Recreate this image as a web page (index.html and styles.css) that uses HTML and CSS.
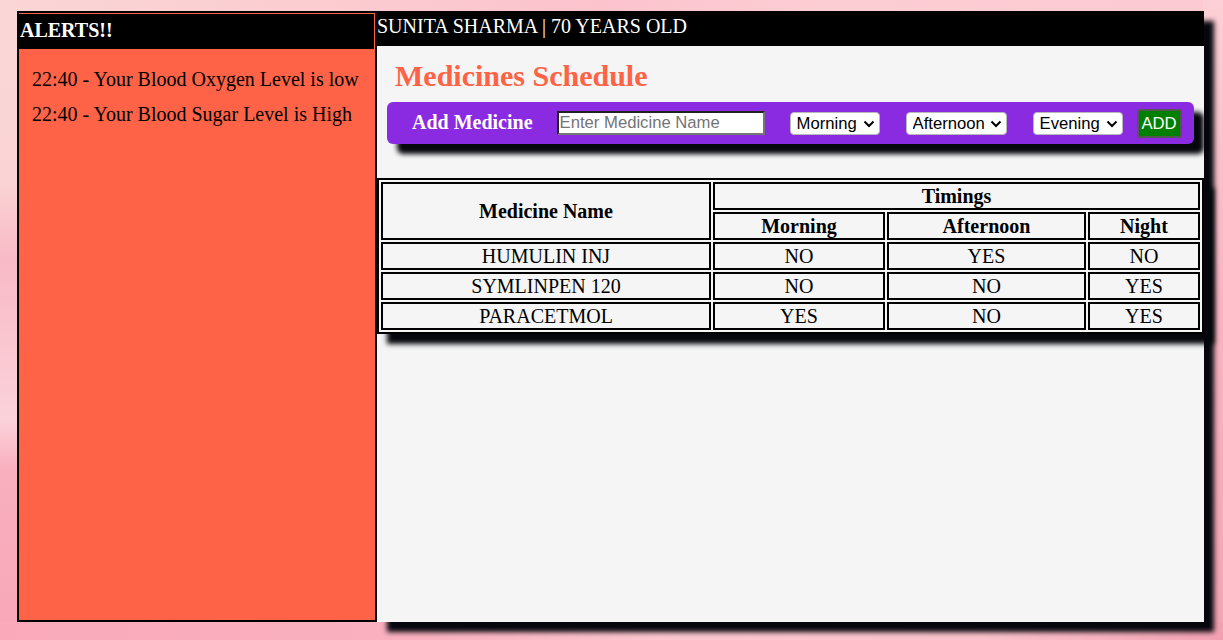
FILE: index.html
```html
<!DOCTYPE html>
<html lang="en">
<head>
<meta charset="utf-8">
<title>Medicines Schedule</title>
<link rel="stylesheet" href="styles.css">
</head>
<body>
<div class="page">
  <aside class="alerts">
    <h3 class="alerts-title">ALERTS!!</h3>
    <div class="alerts-list">
      <p class="alert">22:40 - Your Blood Oxygen Level is low</p>
      <p class="alert">22:40 - Your Blood Sugar Level is High</p>
    </div>
  </aside>
  <main class="main">
    <header class="patient">SUNITA SHARMA | 70 YEARS OLD</header>
    <section class="content">
      <h2 class="title">Medicines Schedule</h2>
      <form class="add-bar">
        <span class="add-label">Add Medicine</span>
        <input class="med-input" type="text" placeholder="Enter Medicine Name">
        <span class="sel sel-morning">
          <select class="slot"><option>Morning</option><option>None</option></select>
          <svg class="chev" width="12" height="8" viewBox="0 0 12 8"><path d="M1.5 1.5 L6 6 L10.5 1.5" fill="none" stroke="#000" stroke-width="2"/></svg>
        </span>
        <span class="sel sel-afternoon">
          <select class="slot"><option>Afternoon</option><option>None</option></select>
          <svg class="chev" width="12" height="8" viewBox="0 0 12 8"><path d="M1.5 1.5 L6 6 L10.5 1.5" fill="none" stroke="#000" stroke-width="2"/></svg>
        </span>
        <span class="sel sel-evening">
          <select class="slot"><option>Evening</option><option>None</option></select>
          <svg class="chev" width="12" height="8" viewBox="0 0 12 8"><path d="M1.5 1.5 L6 6 L10.5 1.5" fill="none" stroke="#000" stroke-width="2"/></svg>
        </span>
        <button class="add-btn" type="button">ADD</button>
      </form>
      <table class="schedule">
        <colgroup>
          <col class="c-name"><col class="c-morning"><col class="c-afternoon"><col class="c-night">
        </colgroup>
        <thead>
          <tr><th rowspan="2">Medicine Name</th><th colspan="3">Timings</th></tr>
          <tr><th>Morning</th><th>Afternoon</th><th>Night</th></tr>
        </thead>
        <tbody>
          <tr><td>HUMULIN INJ</td><td>NO</td><td>YES</td><td>NO</td></tr>
          <tr><td>SYMLINPEN 120</td><td>NO</td><td>NO</td><td>YES</td></tr>
          <tr><td>PARACETMOL</td><td>YES</td><td>NO</td><td>YES</td></tr>
        </tbody>
      </table>
    </section>
  </main>
</div>
</body>
</html>
```
FILE: styles.css
```css
* { box-sizing: border-box; }

html, body {
  margin: 0;
  height: 640px;
  overflow: hidden;
}

body {
  font-family: "Liberation Serif", "Times New Roman", serif;
  font-size: 20px;
  color: #000;
  background-color: #fbc6cf;
  background-image:
    linear-gradient(90deg, #f9a9ba 0%, #fab1c0 35%, #fcc8d0 55%, #fbc3cc 80%, #f3a1b2 100%),
    linear-gradient(180deg, #fad7d6 0px, #fad4d5 180px, #f8bac6 260px, #fbd2da 420px, #f9afbe 470px, #f8a7b8 640px),
    linear-gradient(180deg, #fcd0d6 0px, #f9b4c2 300px, #f4a4b4 640px),
    linear-gradient(100deg, #fad6d5 0%, #fcc3cd 45%, #fdcdd4 62%, #fbc9d1 100%);
  background-size: 100% 18px, 17px 100%, 20px 100%, 100% 100%;
  background-position: left bottom, left top, right top, left top;
  background-repeat: no-repeat;
}

.page {
  display: flex;
  padding: 11px 0 0 17px;
  height: 622px;
}

/* ---------- alerts panel ---------- */
.alerts {
  width: 360px;
  height: 611px;
  background: #ff6347;
  border: 2px solid #000;
}

.alerts-title {
  margin: 1px 1px 0 0;
  height: 35px;
  line-height: 32px;
  padding-left: 1px;
  background: #000;
  color: #fff;
  font-size: 20px;
  font-weight: bold;
}

.alerts-list {
  padding: 19px 13px;
}

.alert {
  margin: 0 0 12px;
  line-height: 23px;
}

/* ---------- main ---------- */
.main {
  width: 827px;
  height: 611px;
  display: flex;
  flex-direction: column;
  background: #f5f5f5;
  box-shadow: 10px 10px 5px #05070c;
}

.patient {
  height: 35px;
  line-height: 30px;
  background: #000;
  color: #fff;
  white-space: nowrap;
}

.content {
  flex: 1;
  display: flex;
  flex-direction: column;
}

.title {
  margin: 13px 0 9px 18px;
  font-size: 30px;
  line-height: 34px;
  font-weight: bold;
  color: #ff6347;
}

/* ---------- add bar ---------- */
.add-bar {
  margin: 0 10px;
  height: 42px;
  display: flex;
  align-items: center;
  padding-left: 25px;
  background: #8a2be2;
  border-radius: 6px;
  box-shadow: 10px 10px 5px #05070c;
}

.add-label {
  color: #fff;
  font-weight: bold;
  line-height: 23px;
  padding-bottom: 1px;
  white-space: nowrap;
}

.med-input {
  margin-left: 24px;
  width: 208px;
  height: 24px;
  padding: 0 2px 0 1px;
  border: 2px inset #767676;
  background: #fff;
  font-family: "Liberation Sans", Arial, sans-serif;
  font-size: 16.67px;
  color: #000;
  outline: none;
}

.med-input::placeholder {
  color: #757575;
}

.sel {
  position: relative;
  display: block;
  height: 23px;
}

.sel-morning { margin-left: 25px; width: 90px; }
.sel-afternoon { margin-left: 26px; width: 101px; }
.sel-evening { margin-left: 26px; width: 90px; }

.slot {
  appearance: none;
  -webkit-appearance: none;
  display: block;
  width: 100%;
  height: 23px;
  margin: 0;
  padding: 0 0 0 6px;
  border: 1px solid #b9b9b9;
  border-radius: 4px;
  background: #fff;
  font-family: "Liberation Sans", Arial, sans-serif;
  font-size: 16.67px;
  color: #000;
  line-height: 21px;
}

.chev {
  position: absolute;
  right: 5px;
  top: 8px;
  pointer-events: none;
}

.add-btn {
  margin-left: 14px;
  width: 45px;
  height: 29px;
  padding: 0;
  border: 2px solid #555;
  border-radius: 3px;
  background: #008000;
  color: #fff;
  font-family: "Liberation Sans", Arial, sans-serif;
  font-size: 16.67px;
  line-height: 25px;
}

/* ---------- table ---------- */
.schedule {
  margin-top: 34px;
  width: 827px;
  table-layout: fixed;
  border: 2px solid #000;
  border-spacing: 2px;
  box-shadow: 10px 10px 5px #05070c;
  font-size: 20px;
}

.c-name { width: 330px; }
.c-morning { width: 172px; }
.c-afternoon { width: 199px; }
.c-night { width: 112px; }

.schedule th,
.schedule td {
  border: 2px solid #000;
  padding: 0;
  line-height: 24px;
  text-align: center;
  vertical-align: middle;
  white-space: nowrap;
}

.schedule th {
  font-weight: bold;
}
```
